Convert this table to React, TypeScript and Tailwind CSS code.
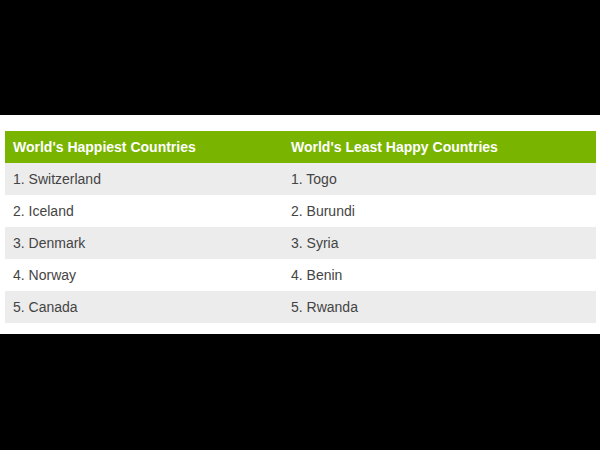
const happiest = ['Switzerland', 'Iceland', 'Denmark', 'Norway', 'Canada'];
const leastHappy = ['Togo', 'Burundi', 'Syria', 'Benin', 'Rwanda'];

export default function App() {
  return (
    <div className="min-h-[450px] bg-black" style={{ fontFamily: '"Liberation Sans", Arial, sans-serif' }}>
      <div className="h-[115px]" />
      <div className="bg-white pt-[16px] pb-[11px] pl-[5px] pr-[4px]">
        <table className="w-full border-collapse text-[14px]">
          <thead>
            <tr className="h-[32px] bg-[#78b400] text-left text-white">
              <th className="w-[278px] px-[8px] font-bold">World's Happiest Countries</th>
              <th className="px-[8px] font-bold">World's Least Happy Countries</th>
            </tr>
          </thead>
          <tbody>
            {happiest.map((name, i) => (
              <tr key={name} className={`h-[32px] text-[#444] ${i % 2 === 0 ? 'bg-[#ececec]' : 'bg-white'}`}>
                <td className="px-[8px]">{i + 1}. {name}</td>
                <td className="px-[8px]">{i + 1}. {leastHappy[i]}</td>
              </tr>
            ))}
          </tbody>
        </table>
      </div>
    </div>
  );
}
